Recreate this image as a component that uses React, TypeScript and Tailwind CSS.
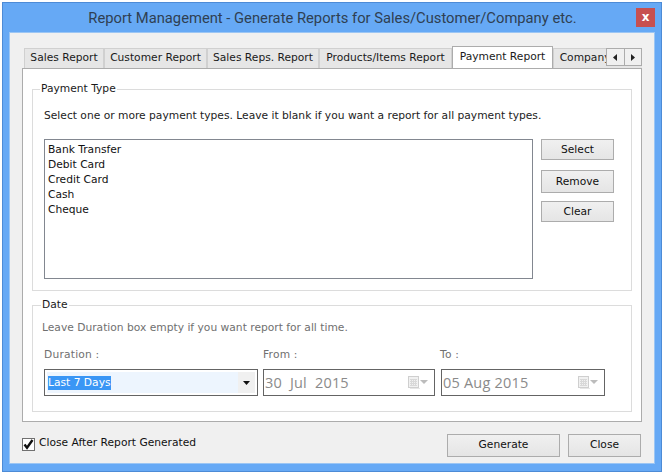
const FONT = "font-['DejaVu_Sans',sans-serif]";

const tabs = [
  { label: "Sales Report", width: "w-[80px]" },
  { label: "Customer Report", width: "w-[103px]" },
  { label: "Sales Reps. Report", width: "w-[112px]" },
  { label: "Products/Items Report", width: "w-[133px]" },
];

function Tab({ label, width }: { label: string; width: string }) {
  return (
    <div className={`flex h-[20px] ${width} shrink-0 items-center justify-center border border-b-0 border-[#d0d0d0] bg-[#e6e6e6] text-[10.7px] text-[#1a1a1a]`}>
      {label}
    </div>
  );
}

function SideButton({ label, height }: { label: string; height: string }) {
  return (
    <button className={`block ${height} w-[73px] border border-[#acacac] bg-gradient-to-b from-[#f0f0f0] to-[#e5e5e5] pt-[1px] text-[10.7px] text-[#111]`}>
      {label}
    </button>
  );
}

function CalendarIcon() {
  return (
    <svg width="20" height="13" viewBox="0 0 20 13" className="shrink-0">
      <rect x="0.5" y="0.5" width="10" height="11" fill="#f1f1f1" stroke="#cfcfcf" />
      <path d="M2 3.5h7M2 5.5h7M2 7.5h7M2 9.5h7M3.5 3v7M5.5 3v7M7.5 3v7" stroke="#d8d8d8" strokeWidth="1" />
      <path d="M12 12.5h-10" stroke="#e6e6e6" />
      <path d="M12 4h8l-4 4z" fill="#bcbcbc" />
    </svg>
  );
}

function DateBox({ value }: { value: string }) {
  return (
    <div className="flex h-[27px] w-full items-center justify-between border border-[#646464] bg-white pl-[1px] pr-[6px]">
      <span className="font-['Open_Sans',sans-serif] text-[14.5px] whitespace-pre text-[#8a8a8a]">{value}</span>
      <CalendarIcon />
    </div>
  );
}

export default function App() {
  return (
    <div className={`h-[474px] w-[665px] overflow-hidden bg-white p-[2px] ${FONT}`}>
      <div className="flex h-[470px] w-[660px] flex-col border border-[#4d8bd6] bg-[#66a9f5] px-[6px] pb-[7px]">
        {/* Title bar */}
        <div className="flex h-[29px] shrink-0 items-start">
          <div className="flex h-[29px] flex-1 items-center justify-center pl-[20px] pt-[2px] font-['Roboto',sans-serif] text-[14.75px] text-[#2f4052]">
            Report Management - Generate Reports for Sales/Customer/Company etc.
          </div>
          <div className="mt-[5px] flex h-[19px] w-[19px] items-center justify-center bg-[#c75050] pb-[2px] text-[12px] font-bold text-white">
            x
          </div>
        </div>

        {/* Client area */}
        <div className="flex min-h-0 flex-1 flex-col border border-[#9cc6f4] bg-[#f0f0f0] pl-[12px] pr-[12px] pt-[13px]">
          {/* Tab strip */}
          <div className="relative flex h-[22px] shrink-0 items-end overflow-hidden pl-[2px]">
            {tabs.map((t) => (
              <Tab key={t.label} label={t.label} width={t.width} />
            ))}
            <div className="z-10 -mb-px flex h-[23px] w-[101px] shrink-0 items-start justify-center border border-b-0 border-[#acacac] bg-white pt-[2px] text-[10.7px] text-[#1a1a1a]">
              Payment Report
            </div>
            <Tab label="Company Report" width="w-[103px]" />
            <div className="absolute right-0 top-[2px] flex h-[18px] w-[36px] border border-[#acacac] bg-[#f0f0f0]">
              <div className="flex flex-1 items-center justify-center border-r border-[#acacac]">
                <svg width="5" height="7" viewBox="0 0 5 7"><path d="M4 0v7L0 3.5z" fill="#222" /></svg>
              </div>
              <div className="flex flex-1 items-center justify-center">
                <svg width="5" height="7" viewBox="0 0 5 7"><path d="M1 0v7l4-3.5z" fill="#222" /></svg>
              </div>
            </div>
          </div>

          {/* Tab page */}
          <div className="flex h-[354px] shrink-0 flex-col gap-[7px] border border-[#acacac] bg-white px-[9px] pt-[13px]">
            <fieldset className="h-[209px] border border-[#dcdcdc] pl-[11px] pr-[17px]">
              <legend className="ml-[-4px] px-[1px] text-[10.7px] leading-[14px] text-[#1a1a1a]">Payment Type</legend>
              <p className="mt-[13px] text-[10.7px] leading-[14px] text-[#222]">
                Select one or more payment types. Leave it blank if you want a report for all payment types.
              </p>
              <div className="mt-[16px] flex gap-[8px]">
                <div className="h-[140px] flex-1 border border-[#828790] bg-white pl-[3px] pt-[2px] text-[10.7px] leading-[15px] text-[#111]">
                  <div>Bank Transfer</div>
                  <div>Debit Card</div>
                  <div>Credit Card</div>
                  <div>Cash</div>
                  <div>Cheque</div>
                </div>
                <div className="flex flex-col">
                  <SideButton label="Select" height="h-[21px]" />
                  <div className="mt-[10px]"><SideButton label="Remove" height="h-[23px]" /></div>
                  <div className="mt-[8px]"><SideButton label="Clear" height="h-[21px]" /></div>
                </div>
              </div>
            </fieldset>

            <fieldset className="h-[114px] border border-[#dcdcdc] pl-[9px]">
              <legend className="ml-[-1px] px-[1px] text-[10.7px] leading-[14px] text-[#1a1a1a]">Date</legend>
              <p className="mt-[9px] text-[10.7px] leading-[14px] text-[#707070]">
                Leave Duration box empty if you want report for all time.
              </p>
              <div className="mt-[13px] flex gap-[5px] pl-[2px] text-[10.7px] leading-[14px] tracking-[0.2px] text-[#707070]">
                <div className="w-[214px]">
                  <div>Duration :</div>
                  <div className="mt-[7px] flex h-[27px] items-center border border-[#646464] bg-white p-[2px]">
                    <div className="flex h-full flex-1 items-center bg-[#edf5fe] pl-[1px]">
                      <span className="bg-[#3a96f5] leading-[14px] tracking-normal text-white">Last 7 Days</span>
                    </div>
                    <div className="flex h-full w-[17px] items-center justify-center bg-[#f0f0f0]">
                      <svg width="7" height="4" viewBox="0 0 7 4"><path d="M0 0h7L3.5 4z" fill="#111" /></svg>
                    </div>
                  </div>
                </div>
                <div className="w-[172px]">
                  <div>From :</div>
                  <div className="mt-[7px]"><DateBox value="30  Jul  2015" /></div>
                </div>
                <div className="w-[165px]">
                  <div>To :</div>
                  <div className="ml-[1px] mt-[7px] w-[164px]"><DateBox value="05 Aug 2015" /></div>
                </div>
              </div>
            </fieldset>
          </div>

          {/* Footer */}
          <div className="flex flex-1 items-start justify-between pr-[1px] pt-[12px]">
            <label className="mt-[4px] flex items-center gap-[4px] text-[10.7px] text-[#111]">
              <span className="flex h-[13px] w-[13px] items-center justify-center border border-[#707070] bg-white">
                <svg width="11" height="11" viewBox="0 0 11 11"><path d="M1.5 5.5l2.5 3.2L9.5 1" fill="none" stroke="#111" strokeWidth="2.4" /></svg>
              </span>
              <span className="-mt-[3px]">Close After Report Generated</span>
            </label>
            <div className="flex gap-[8px]">
              <button className="h-[23px] w-[113px] border border-[#acacac] bg-gradient-to-b from-[#f0f0f0] to-[#e5e5e5] text-[10.7px] text-[#111]">Generate</button>
              <button className="h-[23px] w-[73px] border border-[#acacac] bg-gradient-to-b from-[#f0f0f0] to-[#e5e5e5] text-[10.7px] text-[#111]">Close</button>
            </div>
          </div>
        </div>
      </div>
    </div>
  );
}
